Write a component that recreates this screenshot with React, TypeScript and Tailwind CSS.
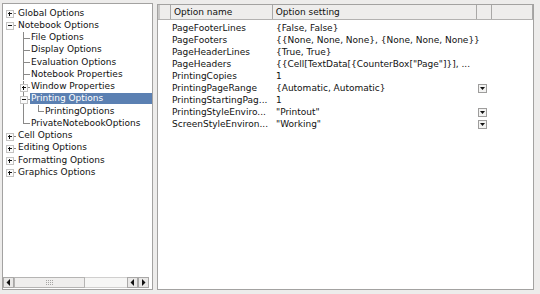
import React from 'react';

type Node = { label: string; kind: 'top' | 'child' | 'grand'; exp?: '+' | '-'; last?: boolean; sel?: boolean; openBelow?: boolean };

const tree: Node[] = [
  { label: 'Global Options', kind: 'top', exp: '+' },
  { label: 'Notebook Options', kind: 'top', exp: '-', openBelow: true },
  { label: 'File Options', kind: 'child' },
  { label: 'Display Options', kind: 'child' },
  { label: 'Evaluation Options', kind: 'child' },
  { label: 'Notebook Properties', kind: 'child' },
  { label: 'Window Properties', kind: 'child', exp: '+' },
  { label: 'Printing Options', kind: 'child', exp: '-', sel: true, openBelow: true },
  { label: 'PrintingOptions', kind: 'grand', last: true },
  { label: 'PrivateNotebookOptions', kind: 'child', last: true },
  { label: 'Cell Options', kind: 'top', exp: '+' },
  { label: 'Editing Options', kind: 'top', exp: '+' },
  { label: 'Formatting Options', kind: 'top', exp: '+' },
  { label: 'Graphics Options', kind: 'top', exp: '+' },
];

const LINE = '#8a8988';

function Expander({ cx, cy, sign }: { cx: number; cy: number; sign: '+' | '-' }) {
  return (
    <g>
      <rect x={cx - 3.5} y={cy - 3.5} width={7} height={7} fill="#fbfbfb" stroke="#c4c3c2" strokeWidth={1} />
      <line x1={cx - 2} y1={cy} x2={cx + 2} y2={cy} stroke="#111" strokeWidth={1} />
      {sign === '+' && <line x1={cx} y1={cy - 2} x2={cx} y2={cy + 2} stroke="#111" strokeWidth={1} />}
    </g>
  );
}

function TreeRow({ n }: { n: Node }) {
  const H = 12.25;
  const mid = 6.5;
  const textX = n.kind === 'top' ? 14 : n.kind === 'child' ? 27 : 41;
  return (
    <div className="flex items-center h-[12.25px] relative">
      <svg width={textX} height={H} className="shrink-0" shapeRendering="crispEdges">
        {n.kind === 'top' && (
          <>
            <line x1={9.5} y1={mid} x2={13} y2={mid} stroke={LINE} />
            <Expander cx={6.5} cy={mid} sign={n.exp!} />
            {n.openBelow && <line x1={20.5} y1={mid + 3} x2={20.5} y2={H} stroke={LINE} />}
          </>
        )}
        {n.kind === 'child' && (
          <>
            <line x1={20.5} y1={0} x2={20.5} y2={n.last ? mid : H} stroke={LINE} />
            <line x1={20.5} y1={mid} x2={27} y2={mid} stroke={LINE} />
            {n.exp && <Expander cx={20.5} cy={mid} sign={n.exp} />}
            {n.openBelow && <line x1={35.5} y1={mid + 4} x2={35.5} y2={H} stroke={LINE} />}
          </>
        )}
        {n.kind === 'grand' && (
          <>
            <line x1={20.5} y1={0} x2={20.5} y2={H} stroke={LINE} />
            <line x1={35.5} y1={0} x2={35.5} y2={mid} stroke={LINE} />
            <line x1={35.5} y1={mid} x2={41} y2={mid} stroke={LINE} />
          </>
        )}
      </svg>
      <div
        className={
          n.sel
            ? 'flex-1 h-[11px] flex items-center bg-[#5b80b2] text-white pl-[1px] whitespace-nowrap'
            : 'flex-1 pl-[1px] whitespace-nowrap'
        }
      >
        {n.label}
      </div>
    </div>
  );
}

function Arrow({ dir }: { dir: 'left' | 'right' }) {
  return (
    <div className="w-[11px] h-[11px] shrink-0 border border-[#a9a8a7] bg-[#e9e8e7] flex items-center justify-center">
      <svg width="5" height="7" viewBox="0 0 5 7">
        {dir === 'left' ? <polygon points="4,0 4,7 0.5,3.5" fill="#111" /> : <polygon points="1,0 1,7 4.5,3.5" fill="#111" />}
      </svg>
    </div>
  );
}

function Dropdown() {
  return (
    <div className="w-[9px] h-[9px] border border-[#9e9d9c] bg-[#f3f3f2] flex items-center justify-center">
      <svg width="5" height="3" viewBox="0 0 5 3">
        <polygon points="0,0 5,0 2.5,3" fill="#111" />
      </svg>
    </div>
  );
}

const rows: { name: string; value: string; dd?: boolean }[] = [
  { name: 'PageFooterLines', value: '{False, False}' },
  { name: 'PageFooters', value: '{{None, None, None}, {None, None, None}}' },
  { name: 'PageHeaderLines', value: '{True, True}' },
  { name: 'PageHeaders', value: '{{Cell[TextData[{CounterBox["Page"]}], ...' },
  { name: 'PrintingCopies', value: '1' },
  { name: 'PrintingPageRange', value: '{Automatic, Automatic}', dd: true },
  { name: 'PrintingStartingPag...', value: '1' },
  { name: 'PrintingStyleEnviro...', value: '"Printout"', dd: true },
  { name: 'ScreenStyleEnviron...', value: '"Working"', dd: true },
];

export default function App() {
  return (
    <div
      className="w-[540px] h-[294px] bg-[#edeceb] flex text-[9px] leading-none text-[#111]"
      style={{ fontFamily: '"DejaVu Sans", sans-serif' }}
    >
      {/* Left tree panel */}
      <div className="ml-[2px] mt-[3px] w-[151px] h-[287px] border border-[#a3a2a1] bg-white flex flex-col">
        <div className="flex-1 pt-[3px] overflow-hidden">
          {tree.map((n) => (
            <TreeRow key={n.label} n={n} />
          ))}
        </div>
        <div className="h-[12px] flex items-end pb-[1px] bg-white">
          <Arrow dir="left" />
          <div className="w-[71px] h-[11px] border border-[#b5b4b3] bg-[#efeeed] flex items-center justify-center">
            <div className="grid grid-cols-4 gap-[1px]">
              {Array.from({ length: 12 }).map((_, i) => (
                <div key={i} className="w-[1px] h-[1px] bg-[#a6a5a4]" />
              ))}
            </div>
          </div>
          <div className="w-[42px] h-[11px] border-y border-[#d0cfce] bg-[#f6f6f5]" />
          <Arrow dir="left" />
          <Arrow dir="right" />
        </div>
      </div>

      {/* Right option panel */}
      <div className="ml-[4px] mt-[4px] w-[377px] h-[286px] border border-[#a3a2a1] bg-white flex flex-col">
        <div className="h-[15px] flex bg-[#eeedec] border-b border-[#b3b2b1]">
          <div className="w-[13px] border-r border-[#a9a8a7] border-l-2 border-l-[#c9c8c7]" />
          <div className="w-[102px] border-r border-[#a9a8a7] flex items-center pl-[3px]">Option name</div>
          <div className="w-[205px] border-r border-[#a9a8a7] flex items-center pl-[3px]">Option setting</div>
          <div className="w-[15px] border-r border-[#a9a8a7]" />
          <div className="w-[41px] border-r border-[#a9a8a7]" />
        </div>
        <div className="pt-[2px]">
          {rows.map((r) => (
            <div key={r.name} className="h-[12.1px] flex items-center">
              <div className="w-[13px]" />
              <div className="w-[102px] pl-[1px] whitespace-nowrap">{r.name}</div>
              <div className="w-[205px] pl-[3px] whitespace-nowrap">{r.value}</div>
              <div className="w-[15px] flex items-center">{r.dd && <Dropdown />}</div>
            </div>
          ))}
        </div>
      </div>
    </div>
  );
}
